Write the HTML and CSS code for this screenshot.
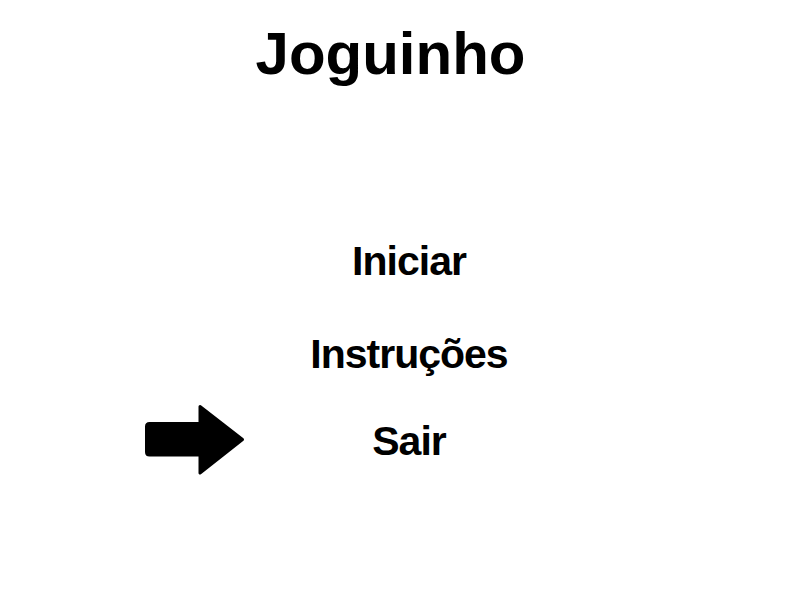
FILE: index.html
```html
<!DOCTYPE html>
<html lang="pt">
<head>
<meta charset="utf-8">
<title>Joguinho</title>
<link rel="stylesheet" href="styles.css">
</head>
<body>
<main class="screen">
  <h1 class="title">Joguinho</h1>
  <ul class="menu">
    <li class="item item-start">Iniciar</li>
    <li class="item item-help">Instruções</li>
    <li class="item item-exit selected">
      <svg class="cursor" width="102" height="74" viewBox="0 0 102 74" aria-hidden="true">
        <path d="M4.5,19.5 H55 V2.5 L97.5,35.5 L55,69 V51 H4.5 Q1.5,51 1.5,48 V22.5 Q1.5,19.5 4.5,19.5 Z" fill="#000" stroke="#000" stroke-width="3" stroke-linejoin="round"/>
      </svg>
      Sair
    </li>
  </ul>
</main>
</body>
</html>
```
FILE: styles.css
```css
html, body {
  margin: 0;
  padding: 0;
  background: #fff;
}
.screen {
  width: 800px;
  height: 600px;
  display: flex;
  flex-direction: column;
  font-family: "Liberation Sans", Arial, sans-serif;
  font-weight: bold;
  color: #000;
}
.title {
  margin: 19px 0 0 0;
  width: 781px;
  text-align: center;
  font-size: 60px;
  line-height: 70px;
  font-weight: bold;
}
.menu {
  list-style: none;
  margin: 0;
  padding: 0;
  width: 818px;
  display: flex;
  flex-direction: column;
  align-items: center;
  font-size: 41px;
  line-height: 48px;
  letter-spacing: -1px;
}
.item {
  position: relative;
}
.item-start { margin-top: 148px; }
.item-help { margin-top: 45px; }
.item-exit { margin-top: 39px; }
.cursor {
  position: absolute;
  left: -227px;
  top: -13px;
}
```
